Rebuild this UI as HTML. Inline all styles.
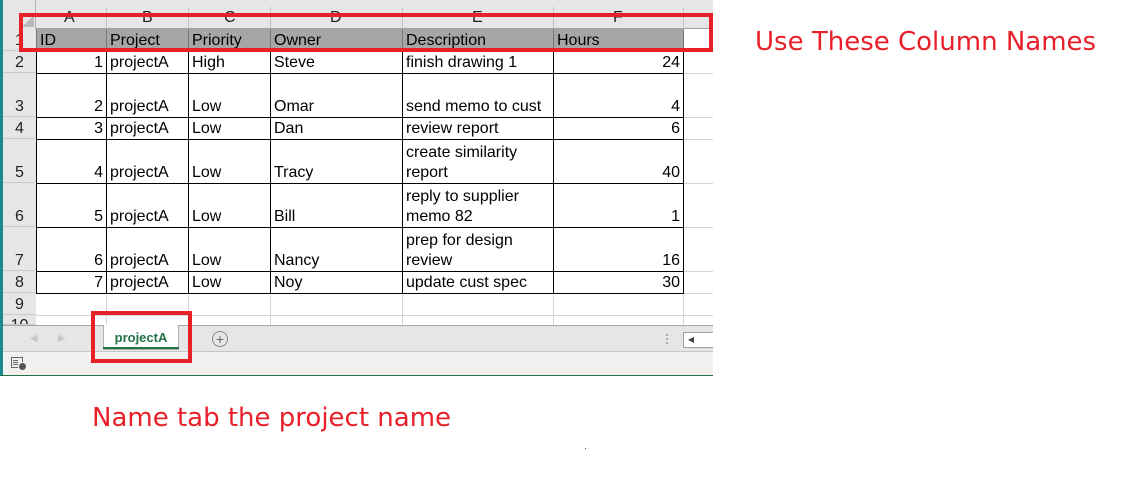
<!DOCTYPE html>
<html><head><style>
body{margin:0;width:1125px;height:491px;background:#fff;position:relative;overflow:hidden;font-family:"Liberation Sans",Arial,sans-serif}
.a{position:absolute}
.rh{position:absolute;left:3px;width:33px;background:#e6e6e6;border-bottom:1px solid #c8c8c8;font-size:16px;display:flex;align-items:flex-end;justify-content:center;box-sizing:border-box;color:#222}
.red{color:#e8202a;position:absolute;font-family:'DejaVu Sans','Liberation Sans',sans-serif;font-size:26px}
.cl{position:absolute;top:9px;font-size:16px;color:#222}
.vs{position:absolute;top:7px;width:1px;height:22px;background:#c0c0c0}
table.t{position:absolute;left:36px;top:51px;border-collapse:collapse;table-layout:fixed;font-size:16px;line-height:20px}
table.t td{border:1px solid #000;padding:0 3px;vertical-align:bottom;overflow:hidden;white-space:nowrap}
table.t td.n{text-align:right}
.hdrcell{position:absolute;top:29px;height:23px;font-size:16px;line-height:24px;border-right:1px solid #777;border-left:1px solid #777;border-bottom:1px solid #000;box-sizing:border-box;padding-left:3px;background:#a6a6a6}
</style></head><body>
<div class="a" style="left:0;top:0;width:3px;height:376px;background:#1b8a8f"></div>
<div class="a" style="left:3px;top:0;width:710px;height:29px;background:#e6e6e6;border-bottom:1px solid #a0a0a0;box-sizing:border-box"></div>
<div class="a" style="left:3px;top:0;width:33px;height:325px;background:#e6e6e6;border-right:1px solid #b0b0b0;box-sizing:border-box"></div>
<div class="a" style="left:22px;top:15px;width:0;height:0;border-left:12px solid transparent;border-bottom:12px solid #b8b8b8"></div>
<div class="cl" style="left:64px">A</div>
<div class="cl" style="left:142px">B</div>
<div class="cl" style="left:224px">C</div>
<div class="cl" style="left:330px">D</div>
<div class="cl" style="left:472px">E</div>
<div class="cl" style="left:613px">F</div>
<div class="vs" style="left:106px"></div>
<div class="vs" style="left:188px"></div>
<div class="vs" style="left:270px"></div>
<div class="vs" style="left:402px"></div>
<div class="vs" style="left:553px"></div>
<div class="vs" style="left:683px"></div>
<div class="a" style="left:683px;top:29px;width:1px;height:296px;background:#d4d4d4"></div>
<div class="a" style="left:106px;top:293px;width:1px;height:32px;background:#d4d4d4"></div>
<div class="a" style="left:188px;top:293px;width:1px;height:32px;background:#d4d4d4"></div>
<div class="a" style="left:270px;top:293px;width:1px;height:32px;background:#d4d4d4"></div>
<div class="a" style="left:402px;top:293px;width:1px;height:32px;background:#d4d4d4"></div>
<div class="a" style="left:553px;top:293px;width:1px;height:32px;background:#d4d4d4"></div>
<div class="a" style="left:36px;top:315px;width:677px;height:1px;background:#d4d4d4"></div>
<div class="a" style="left:684px;top:73px;width:29px;height:1px;background:#d4d4d4"></div>
<div class="a" style="left:684px;top:117px;width:29px;height:1px;background:#d4d4d4"></div>
<div class="a" style="left:684px;top:139px;width:29px;height:1px;background:#d4d4d4"></div>
<div class="a" style="left:684px;top:183px;width:29px;height:1px;background:#d4d4d4"></div>
<div class="a" style="left:684px;top:227px;width:29px;height:1px;background:#d4d4d4"></div>
<div class="a" style="left:684px;top:271px;width:29px;height:1px;background:#d4d4d4"></div>
<div class="a" style="left:684px;top:293px;width:29px;height:1px;background:#d4d4d4"></div>
<div class="hdrcell" style="left:36px;width:71px">ID</div>
<div class="hdrcell" style="left:106px;width:83px">Project</div>
<div class="hdrcell" style="left:188px;width:83px">Priority</div>
<div class="hdrcell" style="left:270px;width:133px">Owner</div>
<div class="hdrcell" style="left:402px;width:152px">Description</div>
<div class="hdrcell" style="left:553px;width:131px">Hours</div>
<table class="t">
<colgroup><col style="width:70px"><col style="width:82px"><col style="width:82px"><col style="width:132px"><col style="width:151px"><col style="width:130px"></colgroup>
<tr style="height:22px"><td class="n">1</td><td>projectA</td><td>High</td><td>Steve</td><td>finish drawing 1</td><td class="n">24</td></tr>
<tr style="height:44px"><td class="n">2</td><td>projectA</td><td>Low</td><td>Omar</td><td>send memo to cust</td><td class="n">4</td></tr>
<tr style="height:22px"><td class="n">3</td><td>projectA</td><td>Low</td><td>Dan</td><td>review report</td><td class="n">6</td></tr>
<tr style="height:44px"><td class="n">4</td><td>projectA</td><td>Low</td><td>Tracy</td><td>create similarity<br>report</td><td class="n">40</td></tr>
<tr style="height:44px"><td class="n">5</td><td>projectA</td><td>Low</td><td>Bill</td><td>reply to supplier<br>memo 82</td><td class="n">1</td></tr>
<tr style="height:44px"><td class="n">6</td><td>projectA</td><td>Low</td><td>Nancy</td><td>prep for design<br>review</td><td class="n">16</td></tr>
<tr style="height:22px"><td class="n">7</td><td>projectA</td><td>Low</td><td>Noy</td><td>update cust spec</td><td class="n">30</td></tr>
</table>
<div class="rh" style="top:29px;height:22px">1</div>
<div class="rh" style="top:51px;height:22px">2</div>
<div class="rh" style="top:73px;height:44px">3</div>
<div class="rh" style="top:117px;height:22px">4</div>
<div class="rh" style="top:139px;height:44px">5</div>
<div class="rh" style="top:183px;height:44px">6</div>
<div class="rh" style="top:227px;height:44px">7</div>
<div class="rh" style="top:271px;height:22px">8</div>
<div class="rh" style="top:293px;height:22px">9</div>
<div class="rh" style="top:315px;height:10px;align-items:flex-start;overflow:hidden;line-height:22px">10</div>
<div class="a" style="left:3px;top:325px;width:710px;height:27px;background:#e6e6e6;border-top:1px solid #a8a8a8;border-bottom:1px solid #c6c6c6;box-sizing:border-box"></div>
<div class="a" style="left:30px;top:333px;font-size:10px;color:#c8c8c8">◀</div>
<div class="a" style="left:58px;top:333px;font-size:10px;color:#c8c8c8">▶</div>
<div class="a" style="left:103px;top:325px;width:76px;height:25px;background:#fff;border:1px solid #b0b0b0;border-top:none;box-sizing:border-box"></div>
<div class="a" style="left:103px;top:347px;width:76px;height:2px;background:#217346"></div>
<div class="a" style="left:103px;top:330px;width:76px;text-align:center;font-size:13px;font-weight:bold;color:#217346">projectA</div>
<div class="a" style="left:212px;top:331px;width:14px;height:14px;border:1px solid #888;border-radius:50%;color:#666;font-size:14px;line-height:14px;text-align:center">+</div>
<div class="a" style="left:666px;top:334px;width:2px;height:2px;background:#aaa;box-shadow:0 4px #aaa,0 8px #aaa"></div>
<div class="a" style="left:683px;top:332px;width:14px;height:14px;border:1px solid #a0a0a0;background:#fff;font-size:8px;line-height:14px;text-align:center;color:#444">◀</div>
<div class="a" style="left:698px;top:332px;width:15px;height:16px;background:#fff;border-top:1px solid #a0a0a0;border-bottom:1px solid #a0a0a0;box-sizing:border-box"></div>
<div class="a" style="left:3px;top:352px;width:710px;height:23px;background:#f2f1f0"></div>
<div class="a" style="left:0;top:375px;width:713px;height:1px;background:#217346"></div>
<div class="a" style="left:11px;top:357px;width:12px;height:11px;border:1px solid #666;box-sizing:border-box"></div>
<div class="a" style="left:13px;top:360px;width:5px;height:1px;background:#666;box-shadow:0 2px #666,0 4px #666"></div>
<div class="a" style="left:18px;top:362px;width:7px;height:7px;border-radius:50%;background:#555;border:1px solid #f2f1f0"></div>
<div class="a" style="left:19px;top:13px;width:694px;height:39px;border:4px solid #e8202a;box-sizing:border-box"></div>
<div class="a" style="left:91px;top:311px;width:101px;height:52px;border:4px solid #e8202a;box-sizing:border-box"></div>
<div class="red" style="left:755px;top:27px">Use These Column Names</div>
<div class="red" style="left:92px;top:403px">Name tab the project name</div>
<div class="a" style="left:585px;top:448px;width:1px;height:1px;background:#555"></div>
</body></html>
